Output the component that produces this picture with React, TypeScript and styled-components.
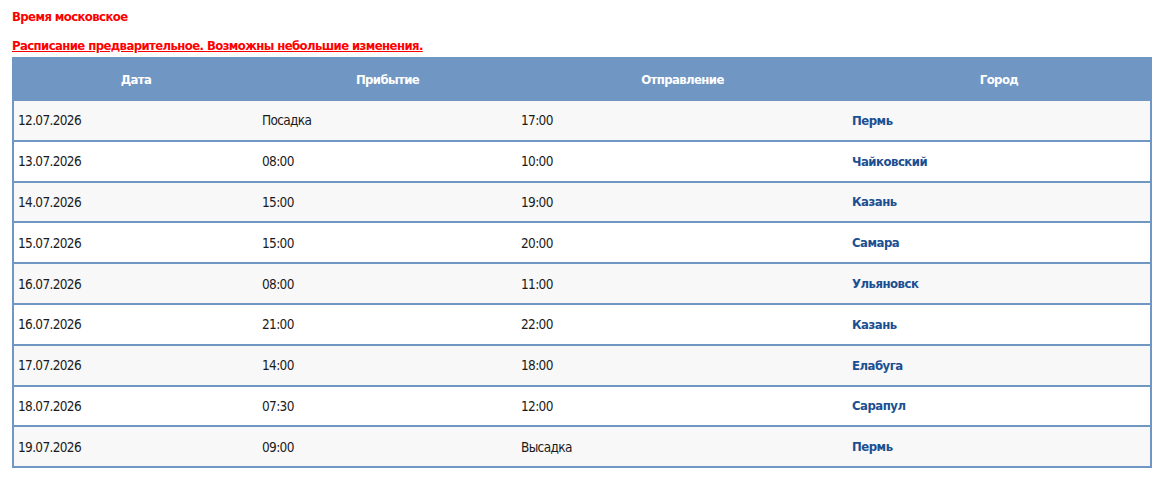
import styled, { createGlobalStyle } from "styled-components";

const GlobalStyle = createGlobalStyle`
    body {
        margin: 0;
        background: #fff;
        font-family: "DejaVu Sans Condensed", "Liberation Sans", sans-serif;
    }
`;

const Page = styled.div`
    padding: 6px 7px 0 12px;
`;

const Notice = styled.p<{ $underline?: boolean }>`
    margin: 0;
    height: ${(p) => (p.$underline ? "18px" : "29px")};
    line-height: 22px;
    color: #ff0000;
    font-size: 13px;
    letter-spacing: -0.6px;
    font-weight: bold;
    text-decoration: ${(p) => (p.$underline ? "underline" : "none")};
`;

const Table = styled.table`
    width: 1140px;
    border-collapse: collapse;
    border: 2px solid #7096c4;
    margin-top: 4px;
    font-size: 13.5px;
    letter-spacing: -0.65px;
    color: #1b1b1b;
`;

const HeadCell = styled.th<{ $width: number }>`
    width: ${(p) => p.$width}px;
    height: 40px;
    padding: 0;
    background: #7096c4;
    color: #fff;
    font-weight: bold;
    font-size: 13px;
    letter-spacing: -0.6px;
    text-align: center;
`;

const Row = styled.tr<{ $odd: boolean }>`
    background: ${(p) => (p.$odd ? "#f8f8f8" : "#fff")};
    border-top: 2px solid #7096c4;
`;

const Cell = styled.td<{ $city?: boolean }>`
    height: 38.8px;
    padding: 0 4px;
    color: ${(p) => (p.$city ? "#1b4f91" : "#1b1b1b")};
    font-weight: ${(p) => (p.$city ? "bold" : "normal")};
    font-size: ${(p) => (p.$city ? "13px" : "13.5px")};
    letter-spacing: ${(p) => (p.$city ? "-0.5px" : "-0.65px")};
`;

const rows = [
    ["12.07.2026", "Посадка", "17:00", "Пермь"],
    ["13.07.2026", "08:00", "10:00", "Чайковский"],
    ["14.07.2026", "15:00", "19:00", "Казань"],
    ["15.07.2026", "15:00", "20:00", "Самара"],
    ["16.07.2026", "08:00", "11:00", "Ульяновск"],
    ["16.07.2026", "21:00", "22:00", "Казань"],
    ["17.07.2026", "14:00", "18:00", "Елабуга"],
    ["18.07.2026", "07:30", "12:00", "Сарапул"],
    ["19.07.2026", "09:00", "Высадка", "Пермь"],
];

const App = () => {
    return (
        <Page>
            <GlobalStyle />
            <Notice>Время московское</Notice>
            <Notice $underline>Расписание предварительное. Возможны небольшие изменения.</Notice>
            <Table>
                <thead>
                    <tr>
                        <HeadCell $width={244}>Дата</HeadCell>
                        <HeadCell $width={259}>Прибытие</HeadCell>
                        <HeadCell $width={331}>Отправление</HeadCell>
                        <HeadCell $width={302}>Город</HeadCell>
                    </tr>
                </thead>
                <tbody>
                    {rows.map((r, i) => (
                        <Row key={i} $odd={i % 2 === 0}>
                            <Cell>{r[0]}</Cell>
                            <Cell>{r[1]}</Cell>
                            <Cell>{r[2]}</Cell>
                            <Cell $city>{r[3]}</Cell>
                        </Row>
                    ))}
                </tbody>
            </Table>
        </Page>
    );
};

export default App;
